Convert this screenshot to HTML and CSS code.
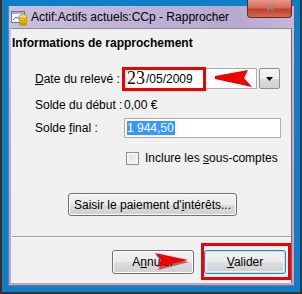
FILE: index.html
```html
<!DOCTYPE html>
<html lang="fr">
<head>
    <meta charset="UTF-8">
    <title>Rapprocher</title>
    <link rel="stylesheet" href="styles.css">
</head>
<body>
    <div class="screen">
        <div class="window">
            <div class="titlebar">
                <svg class="app-icon" width="17" height="17" viewBox="0 0 17 17">
                    <rect x="0.5" y="1.5" width="13" height="11" fill="#f4f6fa" stroke="#6b7890"/>
                    <rect x="1" y="2" width="12" height="2" fill="#9fb3d6"/>
                    <path d="M2 10 L5 7 L7 8.5 L11 5" stroke="#4a6aa0" fill="none"/>
                    <ellipse cx="12" cy="14" rx="4" ry="2" fill="#c9a000"/>
                    <ellipse cx="12" cy="11.5" rx="4" ry="2" fill="#e4bc10" stroke="#9c7a00" stroke-width="0.6"/>
                    <ellipse cx="12" cy="9" rx="4" ry="2" fill="#f0cc30" stroke="#9c7a00" stroke-width="0.6"/>
                    <ellipse cx="12" cy="6.5" rx="4" ry="2" fill="#f7dc5a" stroke="#9c7a00" stroke-width="0.6"/>
                </svg>
                <span class="title">Actif:Actifs actuels:CCp - Rapprocher</span>
                <div class="close-btn">&#x2715;</div>
            </div>
            <div class="client">
                <div class="heading">Informations de rapprochement</div>

                <div class="row date-row">
                    <span class="label"><u>D</u>ate du relevé :</span>
                    <div class="date-field">
                        <div class="entry"><span class="day">23</span>/05/2009</div>
                        <div class="drop-btn">
                            <svg width="7" height="4" viewBox="0 0 7 4"><path d="M0 0 H7 L3.5 4 Z" fill="#000"/></svg>
                        </div>
                    </div>
                </div>

                <div class="row start-row">
                    <span class="label">Solde du début :</span>
                    <span>0,00 €</span>
                </div>

                <div class="row final-row">
                    <span class="label">Solde <u>f</u>inal :</span>
                    <div class="entry wide"><span class="selected">1 944,50</span></div>
                </div>

                <div class="row check-row">
                    <span class="checkbox"></span>
                    <span>Inclure les <u>s</u>ous-comptes</span>
                </div>

                <div class="interest-row">
                    <button class="btn interest">Saisir le paiement d'<u>i</u>ntérêts...</button>
                </div>

                <div class="separator"></div>

                <div class="actions">
                    <button class="btn">A<u>n</u>nuler</button>
                    <button class="btn default"><u>V</u>alider</button>
                </div>
            </div>
        </div>

        <div class="mark mark-date"></div>
        <div class="mark mark-ok"></div>
        <svg class="arrow arrow-left" width="38" height="18" viewBox="0 0 38 18">
            <polygon points="0,6 33,0 29,8 37,17 0,9" fill="#ee0000"/>
        </svg>
        <svg class="arrow arrow-right" width="36" height="20" viewBox="0 0 36 20">
            <polygon points="1,3 34,10 3,18 7,10" fill="#7a0000" opacity="0.55"/>
            <polygon points="0,1 33,8 2,15 6,8" fill="#ee0000"/>
        </svg>
    </div>
</body>
</html>
```

FILE: styles.css
```css
body {
    margin: 0;
    font-family: "Liberation Sans", Arial, sans-serif;
    font-size: 12px;
    color: #000;
}
.screen {
    position: relative;
    width: 302px;
    height: 294px;
    box-sizing: border-box;
    padding: 6px 6px 6px 6px;
    background: #0d7fc6;
    border-left: 2px solid #333;
    border-right: 2px solid #333;
    border-bottom: 2px solid #333;
}
.window {
    position: relative;
    height: 100%;
    box-sizing: border-box;
    display: flex;
    flex-direction: column;
    padding: 0 2px 2px 2px;
    background: linear-gradient(180deg, #cfc2dd 0%, #bfaed3 40%, #b7a5cc 100%);
    border-left: 1px solid #7f7390;
    border-bottom: 1px solid #7f7390;
}
.titlebar {
    height: 22px;
    display: flex;
    align-items: center;
    background: linear-gradient(90deg, #cbbfdc 0%, #c2b1d6 45%, #b9a7cf 80%, #c6b7d8 100%);
    margin: 0 -2px;
    padding-left: 2px;
}
.app-icon {
    margin-top: 2px;
}
.title {
    margin-left: 3px;
    font-size: 12px;
    color: #000;
}
.close-btn {
    position: absolute;
    top: -6px;
    left: 238px;
    width: 45px;
    height: 18px;
    box-sizing: border-box;
    border: 1px solid #6a2a24;
    border-top: none;
    border-radius: 0 0 4px 4px;
    background: linear-gradient(180deg, #e59a8c 0%, #d66a58 45%, #c0402e 55%, #d46b55 100%);
    color: #8b8b8b;
    font-size: 10px;
    font-weight: bold;
    text-align: center;
    line-height: 16px;
}
.client {
    flex: 1;
    background: #f0f0f0;
    border-top: 1px solid #8c8a98;
    border-right: 1px solid #6f6c7a;
    padding: 7px 0 0 1px;
    display: flex;
    flex-direction: column;
}
.heading {
    font-weight: bold;
    line-height: 14px;
}
.row {
    display: flex;
    align-items: center;
    margin-left: 23px;
}
.label {
    width: 89px;
    flex: none;
}
.date-row {
    margin-top: 18px;
    height: 21px;
}
.date-field {
    display: flex;
    gap: 2px;
}
.entry {
    box-sizing: border-box;
    height: 21px;
    width: 133px;
    background: #fff;
    border: 1px solid #abadb3;
    padding-left: 2px;
    display: flex;
    align-items: center;
}
.entry.wide {
    width: 157px;
    height: 20px;
}
.day {
    font-family: "Liberation Serif", "Times New Roman", serif;
    font-size: 18px;
    color: #2a0000;
    margin-right: 1px;
}
.drop-btn {
    width: 21px;
    height: 21px;
    box-sizing: border-box;
    border: 1px solid #8e8f8f;
    border-radius: 2px;
    background: linear-gradient(180deg, #f4f4f4 0%, #ececec 50%, #dcdcdc 51%, #d0d0d0 100%);
    display: flex;
    align-items: center;
    justify-content: center;
}
.start-row {
    margin-top: 8px;
    height: 16px;
}
.final-row {
    margin-top: 5px;
    height: 20px;
}
.selected {
    background: #3399ff;
    color: #fff;
    padding-right: 1px;
}
.check-row {
    margin-top: 13px;
    margin-left: 114px;
    height: 14px;
}
.checkbox {
    width: 13px;
    height: 13px;
    box-sizing: border-box;
    border: 1px solid #8f8f8f;
    background: linear-gradient(135deg, #dcdcdc 0%, #f7f7f7 100%);
    box-shadow: inset 0 0 0 2px #f4f4f4;
    margin-right: 6px;
}
.interest-row {
    margin-top: 28px;
    padding-left: 56px;
}
.btn {
    box-sizing: border-box;
    height: 24px;
    padding: 0;
    border: 1px solid #707070;
    border-radius: 3px;
    background: linear-gradient(180deg, #f2f2f2 0%, #ebebeb 50%, #dddddd 51%, #cfcfcf 100%);
    box-shadow: inset 0 0 0 1px #fcfcfc;
    font-family: "Liberation Sans", Arial, sans-serif;
    font-size: 12px;
    color: #000;
}
.interest {
    width: 169px;
    height: 23px;
}
.separator {
    margin-top: 20px;
    height: 1px;
    background: #a0a0a0;
    border-bottom: 1px solid #fff;
}
.actions {
    margin-top: 12px;
    display: flex;
    gap: 10px;
    padding-left: 100px;
}
.actions .btn {
    width: 82px;
}
.btn.default {
    border-color: #3c7fb1;
    box-shadow: inset 0 0 0 1px #b6e3f8, inset 0 0 0 2px #e6f4fb;
}
.mark {
    position: absolute;
    border: 3px solid #f00000;
    box-sizing: border-box;
}
.mark-date {
    left: 120px;
    top: 67px;
    width: 84px;
    height: 24px;
}
.mark-ok {
    left: 199px;
    top: 243px;
    width: 90px;
    height: 37px;
}
.arrow {
    position: absolute;
}
.arrow-left {
    left: 213px;
    top: 70px;
}
.arrow-right {
    left: 153px;
    top: 252px;
}
```
